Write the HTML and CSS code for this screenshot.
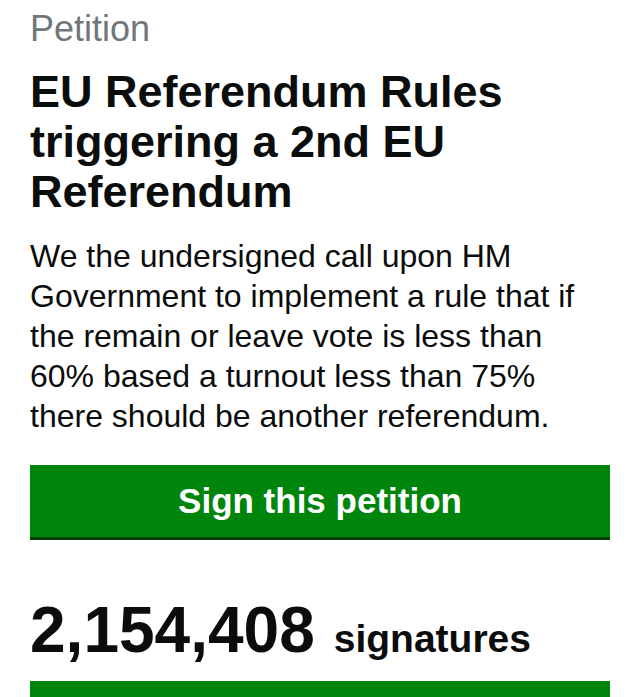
FILE: index.html
```html
<!DOCTYPE html>
<html lang="en">
<head>
<meta charset="utf-8">
<title>Petition</title>
<link rel="stylesheet" href="styles.css">
</head>
<body>
<main class="page">
  <p class="kicker">Petition</p>
  <h1 class="title">EU Referendum Rules triggering a 2nd EU Referendum</h1>
  <p class="lede">We the undersigned call upon HM Government to implement a rule that if the remain or leave vote is less than 60% based a turnout less than 75% there should be another referendum.</p>
  <a class="button" href="#">Sign this petition</a>
  <p class="count"><span class="count-num">2,154,408</span><span class="count-label">signatures</span></p>
  <div class="bar"></div>
</main>
</body>
</html>
```

FILE: styles.css
```css
html, body {
  margin: 0;
  padding: 0;
  background: #ffffff;
}
body {
  font-family: "Liberation Sans", Arial, Helvetica, sans-serif;
  color: #0b0c0c;
  overflow: hidden;
  height: 697px;
}
.page {
  padding: 0 19px 0 30px;
  display: flex;
  flex-direction: column;
}
.kicker {
  margin: 9px 0 0 0;
  font-size: 36px;
  line-height: 40px;
  color: #6f777b;
}
.title {
  margin: 18px 0 0 0;
  font-size: 45px;
  line-height: 50px;
  font-weight: bold;
}
.lede {
  margin: 19px 0 0 0;
  font-size: 32px;
  line-height: 40px;
}
.button {
  margin-top: 29px;
  height: 72px;
  background: #00850c;
  border-bottom: 3px solid #003d07;
  color: #ffffff;
  font-weight: bold;
  font-size: 35px;
  display: flex;
  align-items: center;
  justify-content: center;
  text-decoration: none;
}
.count {
  margin: 50px 0 0 0;
  display: flex;
  align-items: baseline;
  line-height: 80px;
  font-weight: bold;
}
.count-num {
  font-size: 64px;
}
.count-label {
  font-size: 39px;
  margin-left: 19px;
}
.bar {
  margin-top: 2px;
  height: 40px;
  background: #00850c;
}
```
